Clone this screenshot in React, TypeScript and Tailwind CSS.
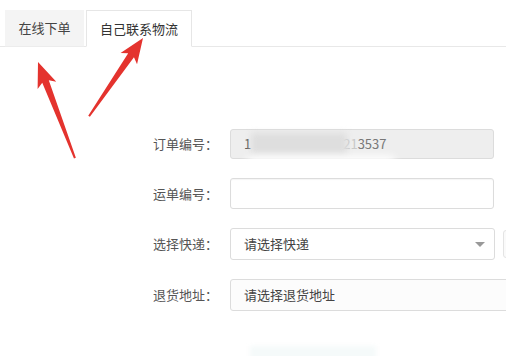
import React from "react";

const font = { fontFamily: '"Noto Sans CJK SC", "Noto Sans", sans-serif' };

function Arrow({ x, y, angle, length }: { x: number; y: number; angle: number; length: number }) {
  const L = length;
  return (
    <g transform={`translate(${x} ${y}) rotate(${angle})`}>
      <polygon
        points={`0,0 -10,25 -3.5,21 -1,${L} 1,${L} 3.5,21 10,25`}
        fill="#e4332e"
      />
    </g>
  );
}

export default function App() {
  return (
    <div className="relative w-[506px] h-[356px] overflow-hidden bg-white text-[13px]" style={font}>
      {/* Tabs */}
      <div className="flex items-end pt-[10px] pl-[5px] border-b border-[#e8e8e8]">
        <div className="w-[79px] h-[37px] flex items-center justify-center bg-[#f4f4f4] text-[#444] mb-[-1px] border-b border-[#ececec]">
          在线下单
        </div>
        <div className="ml-[2px] w-[106px] h-[37px] flex items-center justify-center bg-white text-[#333] border border-[#e6e6e6] border-b-white mb-[-1px]">
          自己联系物流
        </div>
      </div>

      {/* Form */}
      <div className="flex flex-col gap-[19px] mt-[82px]">
        <div className="flex items-center">
          <div className="w-[230px] shrink-0 pl-[153px] text-[#555]">订单编号：</div>
          <div className="relative shrink-0 w-[264px] h-[30px] flex items-center pl-[13px] bg-[#eeeeee] border border-[#dcdcdc] rounded-[3px] text-[#555]">
            <span>1</span>
            <span className="w-[92px]" />
            <span className="text-[#c8c8c8]">21</span>
            <span className="text-[#777]">3537</span>
            <div className="absolute left-[20px] top-[3px] w-[96px] h-[22px] bg-[#dedede] blur-[3px]" />
            <div className="absolute left-[15px] top-[26px] w-[150px] h-[14px] bg-white rounded-full blur-[4px]" />
          </div>
        </div>
        <div className="flex items-center">
          <div className="w-[230px] shrink-0 pl-[153px] text-[#555]">运单编号：</div>
          <div className="shrink-0 w-[264px] h-[31px] bg-white border border-[#dcdcdc] rounded-[3px] shadow-[inset_0_1px_1px_rgba(0,0,0,0.04)]" />
        </div>
        <div className="flex items-center">
          <div className="w-[230px] shrink-0 pl-[153px] text-[#555]">选择快递：</div>
          <div className="shrink-0 w-[265px] h-[32px] flex items-center justify-between pl-[13px] pr-[9px] bg-white border border-[#dcdcdc] rounded-[3px] text-[#444]">
            <span>请选择快递</span>
            <span className="w-0 h-0 border-l-[5px] border-r-[5px] border-t-[5px] border-l-transparent border-r-transparent border-t-[#999]" />
          </div>
          <div className="shrink-0 ml-[8px] w-[10px] h-[28px] border border-[#e4e4e4] rounded-[3px] bg-[#fafafa]" />
        </div>
        <div className="flex items-center">
          <div className="w-[230px] shrink-0 pl-[153px] text-[#555]">退货地址：</div>
          <div className="w-[300px] shrink-0 h-[32px] flex items-center pl-[13px] bg-[#fcfcfc] border border-[#dcdcdc] rounded-[3px] text-[#444]">
            请选择退货地址
          </div>
        </div>
      </div>

      {/* faint washed-out button at bottom */}
      <div className="mt-[35px] ml-[250px] w-[126px] h-[14px] bg-[#f5fafa] blur-[2px]" />

      {/* red annotation arrows */}
      <svg className="absolute inset-0 pointer-events-none" width="506" height="356">
        <Arrow x={38} y={62} angle={-21} length={103} />
        <Arrow x={143} y={38} angle={34.6} length={95} />
      </svg>
    </div>
  );
}
